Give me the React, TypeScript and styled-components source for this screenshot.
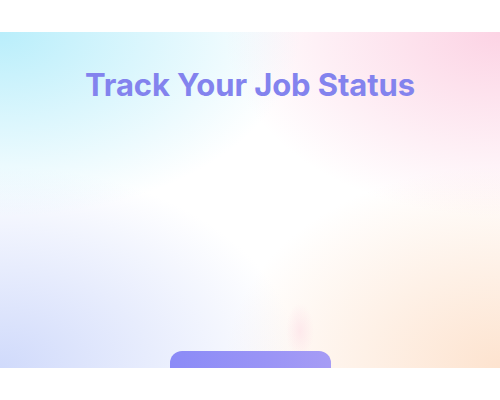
import React from "react";
import styled, { createGlobalStyle } from "styled-components";

const Global = createGlobalStyle`
  html, body { margin: 0; padding: 0; background: #ffffff; }
  body { font-family: Inter, "Noto Sans", sans-serif; }
`;

const Page = styled.div`
  width: 500px;
  height: 400px;
  padding: 32px 0;
  box-sizing: border-box;
  background: #ffffff;
`;

const Hero = styled.section`
  height: 336px;
  overflow: hidden;
  display: flex;
  flex-direction: column;
  align-items: center;
  padding-top: 34px;
  box-sizing: border-box;
  background:
    radial-gradient(ellipse 14px 28px at 60% 89%, rgba(252, 214, 226, 0.45), rgba(252, 214, 226, 0) 100%),
    radial-gradient(ellipse 60% 55% at 0% 0%, #b9eefb 0%, rgba(185, 238, 251, 0) 100%),
    radial-gradient(ellipse 55% 55% at 100% 0%, #fcd3e4 0%, rgba(252, 211, 228, 0) 100%),
    radial-gradient(ellipse 60% 60% at 0% 100%, #d0dafb 0%, rgba(208, 218, 251, 0) 100%),
    radial-gradient(ellipse 55% 60% at 100% 100%, #fde3cf 0%, rgba(253, 227, 207, 0) 100%),
    #ffffff;
`;

const Title = styled.h1`
  margin: 0;
  font-family: Inter, "Noto Sans", sans-serif;
  font-weight: 700;
  font-size: 31px;
  line-height: 1.2;
  letter-spacing: -0.1px;
  color: #8383ee;
  text-align: center;
`;

const CtaButton = styled.button`
  margin-top: 248px;
  flex-shrink: 0;
  width: 161px;
  height: 48px;
  border: none;
  border-radius: 12px;
  background: linear-gradient(90deg, #8b8bf7 0%, #9a94f6 60%, #a69cf5 100%);
  cursor: pointer;
`;

export default function App() {
  return (
    <>
      <Global />
      <Page>
        <Hero>
          <Title>Track Your Job Status</Title>
          <CtaButton aria-label="Get started" />
        </Hero>
      </Page>
    </>
  );
}
